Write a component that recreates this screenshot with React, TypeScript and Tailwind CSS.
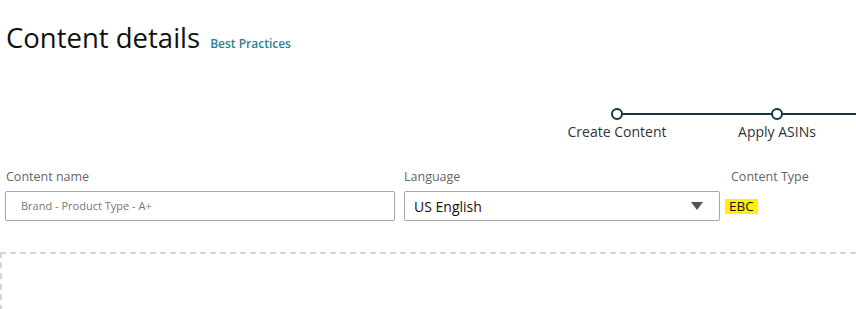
export default function App() {
  return (
    <div className="w-[856px] h-[309px] overflow-hidden bg-white font-['Open_Sans',sans-serif] text-[#111]">
      <div className="flex items-baseline gap-[10px] pl-[6px] pt-[20px]">
        <h1 className="text-[27.5px] leading-[36px] text-[#111]">Content details</h1>
        <a className="text-[12px] font-semibold text-[#2a7f94]">Best Practices</a>
      </div>

      {/* stepper */}
      <div className="relative mt-[52px] h-[40px]">
        <div className="absolute left-[622px] right-0 top-[5px] h-[2px] bg-[#0d3b3f]" />
        <div className="absolute left-[561px] top-0 flex w-[112px] flex-col items-center">
          <div className="h-[12px] w-[12px] rounded-full border-2 border-[#0d3b3f] bg-white" />
          <span className="mt-[3px] text-[14px] leading-[18px] text-[#333]">Create Content</span>
        </div>
        <div className="absolute left-[721px] top-0 flex w-[112px] flex-col items-center">
          <div className="h-[12px] w-[12px] rounded-full border-2 border-[#0d3b3f] bg-white" />
          <span className="mt-[3px] text-[14px] leading-[18px] text-[#333]">Apply ASINs</span>
        </div>
      </div>

      <div className="mt-[20px] flex pl-[5px]">
        <div className="w-[390px]">
          <label className="block pl-[1px] text-[12.5px] leading-[18px] text-[#666]">Content name</label>
          <div className="mt-[5px] flex h-[30px] items-center rounded-[2px] border border-[#a6a6a6] pl-[15px] text-[11px] text-[#777]">
            Brand - Product Type - A+
          </div>
        </div>
        <div className="ml-[9px] w-[316px]">
          <label className="block text-[12.5px] leading-[18px] text-[#666]">Language</label>
          <div className="mt-[5px] flex h-[30px] items-center justify-between rounded-[2px] border border-[#a6a6a6] pl-[9px] pr-[16px] text-[14px] text-[#111]">
            <span>US English</span>
            <svg width="12" height="8" viewBox="0 0 12 8"><path d="M0 0h12L6 8z" fill="#555" /></svg>
          </div>
        </div>
        <div className="ml-[5px]">
          <label className="block pl-[6px] text-[12.5px] leading-[18px] text-[#666]">Content Type</label>
          <div className="mt-[5px] flex h-[30px] items-center">
            <span className="bg-[#fff200] px-[4px] text-[13.5px] leading-[15px] text-[#111]">EBC</span>
          </div>
        </div>
      </div>

      <div className="mt-[31px] h-[80px] border-l-2 border-t-2 border-dashed border-[#d5d5d5]" />
    </div>
  );
}
